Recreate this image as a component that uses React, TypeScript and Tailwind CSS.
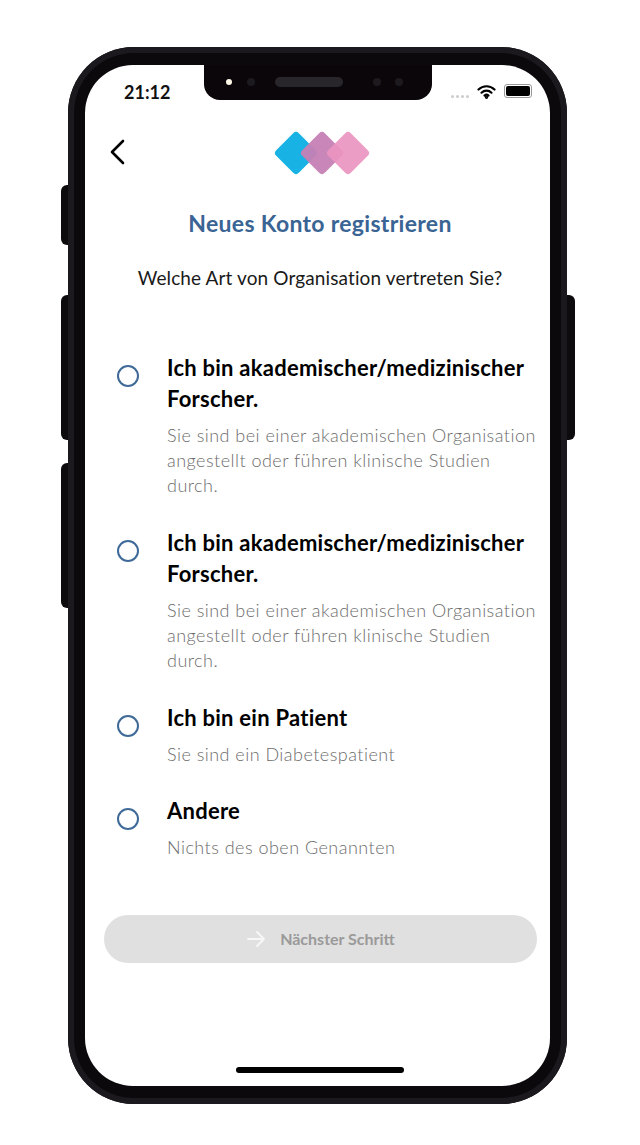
import React from "react";

function Logo() {
  return (
    <svg width="96" height="44" viewBox="0 0 96 44" fill="none">
      <rect x="6" y="6" width="32" height="32" rx="4" transform="rotate(45 22 22)" fill="#19b2e4" />
      <rect x="32" y="6" width="32" height="32" rx="4" transform="rotate(45 48 22)" fill="#c67fb4" fillOpacity="0.95" />
      <rect x="58" y="6" width="32" height="32" rx="4" transform="rotate(45 74 22)" fill="#ea95c0" fillOpacity="0.92" />
    </svg>
  );
}

function Row({ title, sub, className }: { title: React.ReactNode; sub: React.ReactNode; className?: string }) {
  return (
    <div className={"flex items-start " + (className ?? "")}>
      <div className="w-[82px] shrink-0 pl-[32px] pt-[13px]">
        <div className="h-[22px] w-[22px] rounded-full border-[2.5px] border-[#3f6a98]" />
      </div>
      <div className="min-w-0 flex-1 whitespace-nowrap">
        <div className="text-[22px] font-bold leading-[31px] tracking-[0.25px] text-black [font-variant-ligatures:none]">{title}</div>
        <div className="mt-[9px] text-[18px] font-light leading-[25px] tracking-[0.47px] text-[#6c6c6c] [font-variant-ligatures:none]">{sub}</div>
      </div>
    </div>
  );
}

const title1 = (
  <>
    Ich bin akademischer/medizinischer
    <br />
    Forscher.
  </>
);
const sub1 = (
  <>
    Sie sind bei einer akademischen Organisation
    <br />
    angestellt oder führen klinische Studien
    <br />
    durch.
  </>
);

export default function App() {
  return (
    <div className="flex h-[1145px] w-[640px] justify-start bg-white pl-[68px] pt-[47px] font-['Lato','Noto_Sans',sans-serif]">
      <div className="relative h-[1057px] w-[499px]">
        <div className="absolute left-[-7px] top-[138px] h-[60px] w-[10px] rounded-l-[6px] bg-[#0d0b0e]" />
        <div className="absolute left-[-7px] top-[248px] h-[145px] w-[10px] rounded-l-[6px] bg-[#0d0b0e]" />
        <div className="absolute left-[-7px] top-[416px] h-[145px] w-[10px] rounded-l-[6px] bg-[#0d0b0e]" />
        <div className="absolute right-[-8px] top-[248px] h-[145px] w-[10px] rounded-r-[6px] bg-[#0d0b0e]" />
        <div className="relative h-full w-full rounded-[66px] bg-[#0c090c] p-[17px] pt-[18px] shadow-[inset_0_0_0_6px_#1b191e]">
          <div className="relative flex h-[1021px] w-[465px] flex-col overflow-hidden rounded-[48px] bg-white">
            <div className="absolute left-[119px] top-0 flex h-[35px] w-[228px] items-center rounded-b-[16px] bg-[#0b060a] pb-[1px]">
              <div className="ml-[22px] h-[6px] w-[6px] rounded-full bg-[#fdf7e6]" />
              <div className="ml-[15px] h-[8px] w-[8px] rounded-full bg-[#1c1a1e]" />
              <div className="ml-[20px] h-[10px] w-[68px] rounded-full bg-[#29262b]" />
              <div className="ml-[30px] h-[8px] w-[8px] rounded-full bg-[#1c1a1e]" />
              <div className="ml-[14px] h-[8px] w-[8px] rounded-full bg-[#1c1a1e]" />
            </div>
            <div className="flex h-[53px] shrink-0 items-start pl-[39px] pr-[18px] pt-[16px]">
              <span className="text-[18px] font-bold leading-[22px] text-[#111]">21:12</span>
              <div className="ml-auto flex h-[20px] items-center">
                <div className="mr-[8px] mt-[10px] flex gap-[2px]">
                  <i className="h-[3px] w-[3px] rounded-full bg-[#ccc]" />
                  <i className="h-[3px] w-[3px] rounded-full bg-[#ccc]" />
                  <i className="h-[3px] w-[3px] rounded-full bg-[#ccc]" />
                  <i className="h-[3px] w-[3px] rounded-full bg-[#ccc]" />
                </div>
                <svg width="19" height="15" viewBox="0 0 19 15" fill="none" stroke="#000" strokeWidth="2.2" strokeLinecap="round">
                  <path d="M1.5 5.5a11.5 11.5 0 0 1 16 0" />
                  <path d="M4.5 8.7a7.2 7.2 0 0 1 10 0" />
                  <path d="M7.5 11.6a3 3 0 0 1 4 0" />
                  <circle cx="9.5" cy="13.2" r="0.6" fill="#000" />
                </svg>
                <div className="ml-[8px] flex h-[14px] w-[28px] items-center justify-center rounded-[3px] border border-[#999]">
                  <div className="h-[10px] w-[24px] rounded-[2px] bg-black" />
                </div>
              </div>
            </div>
            <div className="relative mt-[13px] flex h-[44px] shrink-0 items-center justify-center">
              <svg className="absolute left-[22px] top-[7px]" width="22" height="28" viewBox="0 0 22 28" fill="none" stroke="#000" strokeWidth="2.6" strokeLinecap="round" strokeLinejoin="round">
                <path d="M16 3 5 14l11 11" />
              </svg>
              <div className="ml-[8px]">
                <Logo />
              </div>
            </div>
            <h1 className="ml-[5px] mt-[34px] text-center text-[23px] font-bold leading-[28px] tracking-[0.3px] text-[#3a6493] [font-variant-ligatures:none]">
              Neues Konto registrieren
            </h1>
            <p className="ml-[5px] mt-[28px] text-center text-[19px] leading-[26px] tracking-[0.12px] text-[#1a1a1a] [font-variant-ligatures:none]">
              Welche Art von Organisation vertreten Sie?
            </p>
            <div className="mt-[61px] flex flex-col">
              <Row title={title1} sub={sub1} className="mb-[29px]" />
              <Row title={title1} sub={sub1} className="mb-[29px]" />
              <Row title="Ich bin ein Patient" sub="Sie sind ein Diabetespatient" className="mb-[28px]" />
              <Row title="Andere" sub="Nichts des oben Genannten" />
            </div>
            <div className="mx-[19px] mt-[55px] flex h-[48px] w-[433px] items-center justify-center rounded-[24px] bg-[#e0e0e0]">
              <svg width="20" height="20" viewBox="0 0 20 20" fill="none" stroke="#f7f7f7" strokeWidth="1.8" strokeLinecap="round" strokeLinejoin="round">
                <path d="M2 10h16M11 3l7 7-7 7" />
              </svg>
              <span className="ml-[14px] text-[16px] font-bold text-[#9a9a9a]">Nächster Schritt</span>
            </div>
            <div className="absolute bottom-[13px] left-[151px] h-[6px] w-[168px] rounded-full bg-black" />
          </div>
        </div>
      </div>
    </div>
  );
}
